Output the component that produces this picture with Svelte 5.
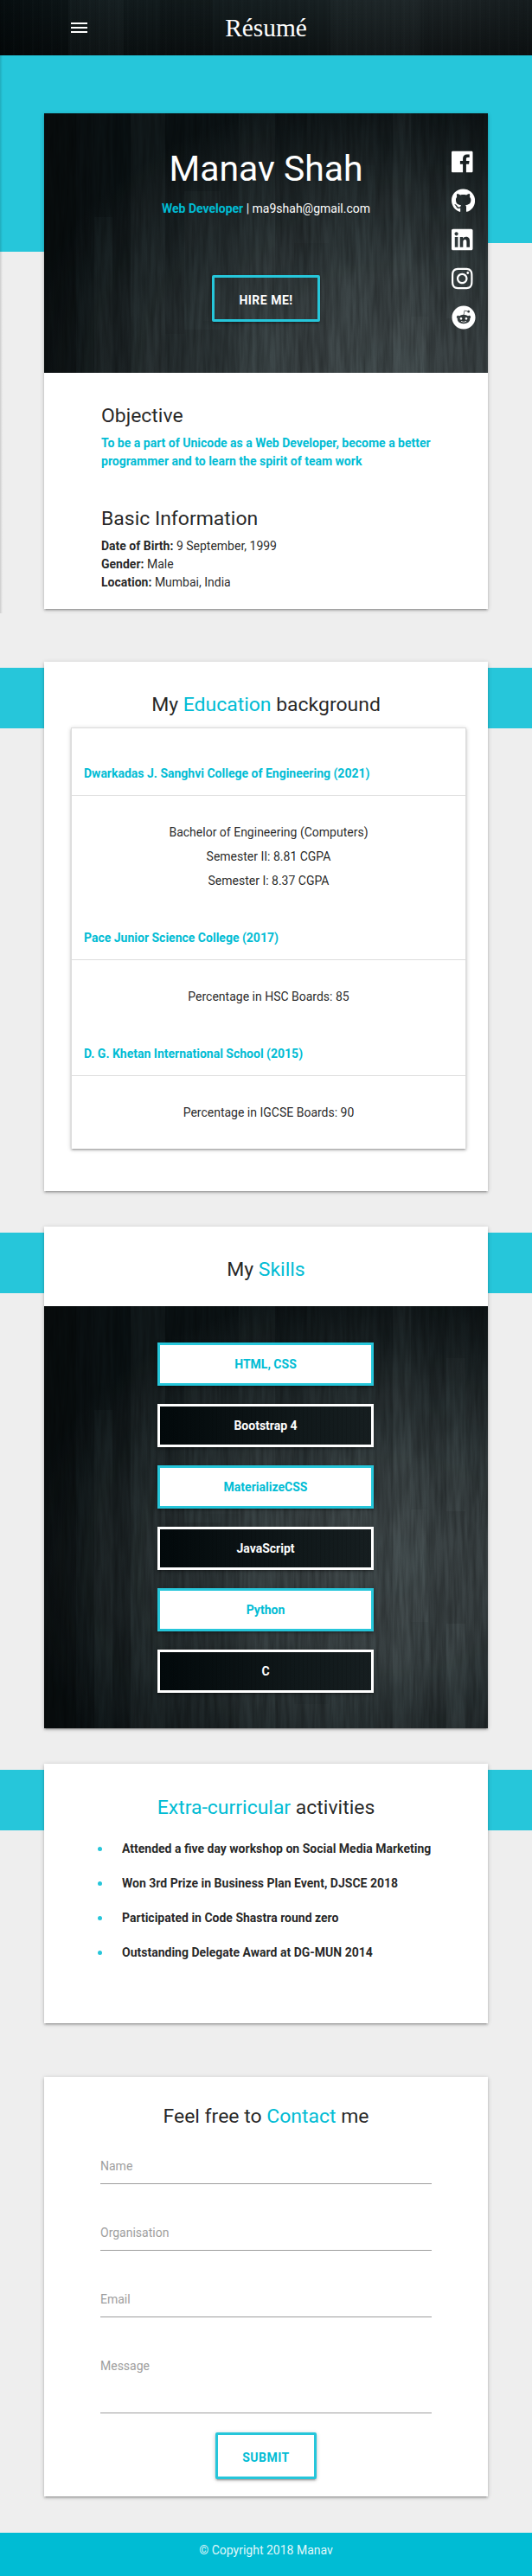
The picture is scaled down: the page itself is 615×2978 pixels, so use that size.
<script>
  const icons = [
    { name: 'Facebook', w: 448, d: 'M448 56.7v398.5c0 13.7-11.1 24.7-24.7 24.7H309.1V306.5h58.2l8.7-67.6h-67v-43.2c0-19.6 5.4-32.9 33.5-32.9h35.8v-60.5c-6.2-.8-27.4-2.7-52.2-2.7-51.6 0-87 31.5-87 89.4v49.9h-58.4v67.6h58.4V480H24.7C11.1 480 0 468.9 0 455.3V56.7C0 43.1 11.1 32 24.7 32h398.5c13.7 0 24.8 11.1 24.8 24.7z' },
    { name: 'GitHub', w: 496, d: 'M165.9 397.4c0 2-2.3 3.6-5.2 3.6-3.3.3-5.6-1.3-5.6-3.6 0-2 2.3-3.6 5.2-3.6 3-.3 5.6 1.3 5.6 3.6zm-31.1-4.5c-.7 2 1.3 4.3 4.3 4.9 2.6 1 5.6 0 6.2-2s-1.3-4.3-4.3-5.2c-2.6-.7-5.5.3-6.2 2.3zm44.2-1.7c-2.9.7-4.9 2.6-4.6 4.9.3 2 2.9 3.3 5.9 2.6 2.9-.7 4.9-2.6 4.6-4.6-.3-1.9-3-3.2-5.9-2.9zM244.8 8C106.1 8 0 113.3 0 252c0 110.9 69.8 205.8 169.5 239.2 12.8 2.3 17.3-5.6 17.3-12.1 0-6.2-.3-40.4-.3-61.4 0 0-70 15-84.7-29.8 0 0-11.4-29.1-27.8-36.6 0 0-22.9-15.7 1.6-15.4 0 0 24.9 2 38.6 25.8 21.9 38.6 58.6 27.5 72.9 20.9 2.3-16 8.8-27.1 16-33.7-55.9-6.2-112.3-14.3-112.3-110.5 0-27.5 7.6-41.3 23.6-58.9-2.6-6.5-11.1-33.3 2.6-67.9 20.9-6.5 69 27 69 27 20-5.6 41.5-8.5 62.8-8.5s42.8 2.9 62.8 8.5c0 0 48.1-33.6 69-27 13.7 34.7 5.2 61.4 2.6 67.9 16 17.7 25.8 31.5 25.8 58.9 0 96.5-58.9 104.2-114.8 110.5 9.2 7.9 17 22.9 17 46.4 0 33.7-.3 75.4-.3 83.6 0 6.5 4.6 14.4 17.3 12.1C428.2 457.8 496 362.9 496 252 496 113.3 383.5 8 244.8 8z' },
    { name: 'LinkedIn', w: 448, d: 'M416 32H31.9C14.3 32 0 46.5 0 64.3v383.4C0 465.5 14.3 480 31.9 480H416c17.6 0 32-14.5 32-32.3V64.3c0-17.8-14.4-32.3-32-32.3zM135.4 416H69V202.2h66.5V416zm-33.2-243c-21.3 0-38.5-17.3-38.5-38.5S80.9 96 102.2 96c21.2 0 38.5 17.3 38.5 38.5 0 21.3-17.2 38.5-38.5 38.5zm282.1 243h-66.4V312c0-24.8-.5-56.7-34.5-56.7-34.6 0-39.9 27-39.9 54.9V416h-66.4V202.2h63.7v29.2h.9c8.9-16.8 30.6-34.5 62.9-34.5 67.2 0 79.7 44.3 79.7 101.9V416z' },
    { name: 'Instagram', w: 448, d: 'M224.1 141c-63.6 0-114.9 51.3-114.9 114.9s51.3 114.9 114.9 114.9S339 319.5 339 255.9 287.7 141 224.1 141zm0 189.6c-41.1 0-74.7-33.5-74.7-74.7s33.5-74.7 74.7-74.7 74.7 33.5 74.7 74.7-33.6 74.7-74.7 74.7zm146.4-194.3c0 14.9-12 26.8-26.8 26.8-14.9 0-26.8-12-26.8-26.8s12-26.8 26.8-26.8 26.8 12 26.8 26.8zm76.1 27.2c-1.7-35.9-9.9-67.7-36.2-93.9-26.2-26.2-58-34.4-93.9-36.2-37-2.1-147.9-2.1-184.9 0-35.8 1.7-67.6 9.9-93.9 36.1s-34.4 58-36.2 93.9c-2.1 37-2.1 147.9 0 184.9 1.7 35.9 9.9 67.7 36.2 93.9s58 34.4 93.9 36.2c37 2.1 147.9 2.1 184.9 0 35.9-1.7 67.7-9.9 93.9-36.2 26.2-26.2 34.4-58 36.2-93.9 2.1-37 2.1-147.8 0-184.8zM398.8 388c-7.8 19.6-22.9 34.7-42.6 42.6-29.5 11.7-99.5 9-132.1 9s-102.7 2.6-132.1-9c-19.6-7.8-34.7-22.9-42.6-42.6-11.7-29.5-9-99.5-9-132.1s-2.6-102.7 9-132.1c7.8-19.6 22.9-34.7 42.6-42.6 29.5-11.7 99.5-9 132.1-9s102.7-2.6 132.1 9c19.6 7.8 34.7 22.9 42.6 42.6 11.7 29.5 9 99.5 9 132.1s2.7 102.7-9 132.1z' },
    { name: 'Reddit', w: 512, d: 'M201.5 305.5c-13.8 0-24.9-11.1-24.9-24.6 0-13.8 11.1-24.9 24.9-24.9 13.6 0 24.6 11.1 24.6 24.9 0 13.6-11.1 24.6-24.6 24.6zM504 256c0 137-111 248-248 248S8 393 8 256 119 8 256 8s248 111 248 248zm-132.3-41.2c-9.4 0-17.7 3.9-23.8 10-22.4-15.5-52.6-25.5-86.1-26.6l17.4-78.3 55.4 12.5c0 13.6 11.1 24.6 24.6 24.6 13.8 0 24.9-11.3 24.9-24.9s-11.1-24.9-24.9-24.9c-9.7 0-18 5.8-22.1 13.8l-61.2-13.6c-3-.8-6.1 1.4-6.9 4.4l-19.1 86.4c-33.2 1.4-63.1 11.3-85.5 26.8-6.1-6.4-14.7-10.2-24.1-10.2-34.9 0-46.3 46.9-14.4 62.8-1.1 5-1.7 10.2-1.7 15.5 0 52.6 59.2 95.2 132 95.2 73.1 0 132.3-42.6 132.3-95.2 0-5.3-.6-10.8-1.9-15.8 31.3-16 19.8-62.5-14.9-62.5zM302.8 331c-18.2 18.2-76.1 17.9-93.6 0-2.2-2.2-6.1-2.2-8.3 0-2.5 2.5-2.5 6.4 0 8.6 22.8 22.8 87.3 22.8 110.2 0 2.5-2.2 2.5-6.1 0-8.6-2.2-2.2-6.1-2.2-8.3 0zm7.7-75c-13.6 0-24.6 11.1-24.6 24.9 0 13.6 11.1 24.6 24.6 24.6 13.8 0 24.9-11.1 24.9-24.6 0-13.8-11-24.9-24.9-24.9z' }
  ];

  const schools = [
    { title: 'Dwarkadas J. Sanghvi College of Engineering (2021)', lines: ['Bachelor of Engineering (Computers)', 'Semester II: 8.81 CGPA', 'Semester I: 8.37 CGPA'] },
    { title: 'Pace Junior Science College (2017)', lines: ['Percentage in HSC Boards: 85'] },
    { title: 'D. G. Khetan International School (2015)', lines: ['Percentage in IGCSE Boards: 90'] }
  ];

  const skills = ['HTML, CSS', 'Bootstrap 4', 'MaterializeCSS', 'JavaScript', 'Python', 'C'];

  const activities = [
    'Attended a five day workshop on Social Media Marketing',
    'Won 3rd Prize in Business Plan Event, DJSCE 2018',
    'Participated in Code Shastra round zero',
    'Outstanding Delegate Award at DG-MUN 2014'
  ];

  const fields = ['Name', 'Organisation', 'Email'];

  // Floor boards: x, width, y, height, lightness shift
  const boards = [
    [0, 37, 0, 490, -0.16], [37, 21, 0, 490, -0.04], [58, 21, 120, 370, 0.02], [79, 21, 0, 490, -0.06],
    [100, 40, 0, 490, 0.03], [140, 22, 0, 255, -0.03], [162, 42, 90, 160, 0.02], [184, 42, 240, 250, -0.03],
    [225, 42, 0, 490, 0.025], [267, 37, 0, 185, -0.04], [289, 40, 150, 310, -0.03], [329, 54, 60, 430, 0.01],
    [383, 20, 0, 490, -0.03], [403, 21, 0, 490, 0.03], [424, 20, 235, 130, 0.03], [445, 20, 0, 490, -0.05],
    [465, 22, 60, 177, 0.02], [465, 22, 237, 130, -0.03], [465, 22, 367, 123, 0.03], [487, 26, 0, 490, -0.03]
  ];
</script>

{#snippet wood()}
  <svg class="wood" width="513" height="490" viewBox="0 0 513 490" aria-hidden="true">
    <defs>
      <radialGradient id="glow" gradientUnits="userSpaceOnUse" cx="0" cy="0" r="1" gradientTransform="translate(400 300) scale(430 325)">
        <stop offset="0" stop-color="#444d4f" />
        <stop offset="0.35" stop-color="#394244" />
        <stop offset="0.7" stop-color="#20282a" />
        <stop offset="1" stop-color="#0b1214" />
      </radialGradient>
      <filter id="grain" x="0" y="0" width="100%" height="100%">
        <feTurbulence type="fractalNoise" baseFrequency="0.22 0.016" numOctaves="3" seed="7" />
        <feColorMatrix values="0 0 0 0 0  0 0 0 0 0  0 0 0 0 0  0.5 0 0 0 -0.14" />
      </filter>
    </defs>
    <rect width="513" height="490" fill="url(#glow)" />
    {#each boards as [x, w, y, h, shade]}
      <rect {x} {y} width={w} height={h} fill={shade < 0 ? '#000' : '#9fb0b4'} opacity={Math.abs(shade) * 1.6} />
    {/each}
    <rect width="513" height="490" filter="url(#grain)" />
  </svg>
{/snippet}

<div class="page">
  <header class="nav">
    <svg class="menu" width="24" height="24" viewBox="0 0 24 24" fill="#fff" aria-label="Menu"><path d="M2 6h19v2H2zM2 11h19v2H2zM2 16h19v2H2z" /></svg>
    <span class="brand">Résumé</span>
  </header>

  <section class="hero">
    <article class="card">
      <div class="banner">
        {@render wood()}
        <div class="intro">
          <h1>Manav Shah</h1>
          <p><b class="accent">Web Developer</b> | ma9shah@gmail.com</p>
          <button class="btn hire">Hire me!</button>
        </div>
        <nav class="social">
          {#each icons as icon}
            <svg height="28" width={(icon.w / 512) * 28} viewBox="0 0 {icon.w} 512" fill="#fff" aria-label={icon.name}><path d={icon.d} /></svg>
          {/each}
        </nav>
      </div>
      <div class="about">
        <h5>Objective</h5>
        <p class="objective">To be a part of Unicode as a Web Developer, become a better programmer and to learn the spirit of team work</p>
        <h5>Basic Information</h5>
        <p><b>Date of Birth:</b> 9 September, 1999</p>
        <p><b>Gender:</b> Male</p>
        <p><b>Location:</b> Mumbai, India</p>
      </div>
    </article>
  </section>

  <section class="band education">
    <article class="card">
      <h5 class="title">My <span class="accent">Education</span> background</h5>
      <ul class="schools">
        {#each schools as school}
          <li>
            <div class="school">{school.title}</div>
            <div class="marks">
              {#each school.lines as line}<span>{line}</span>{/each}
            </div>
          </li>
        {/each}
      </ul>
    </article>
  </section>

  <section class="band skills">
    <article class="card">
      <h5 class="title">My <span class="accent">Skills</span></h5>
      <div class="panel">
        {@render wood()}
        {#each skills as skill, i}
          <div class="skill" class:dark={i % 2 === 1}>{skill}</div>
        {/each}
      </div>
    </article>
  </section>

  <section class="band extra">
    <article class="card">
      <h5 class="title"><span class="accent">Extra-curricular</span> activities</h5>
      <ul class="activities">
        {#each activities as activity}<li>{activity}</li>{/each}
      </ul>
    </article>
  </section>

  <section class="contact">
    <article class="card">
      <h5 class="title">Feel free to <span class="accent">Contact</span> me</h5>
      <form>
        {#each fields as field}<div class="field">{field}</div>{/each}
        <div class="field message">Message</div>
        <button type="button" class="btn submit">Submit</button>
      </form>
    </article>
  </section>

  <footer>© Copyright 2018 Manav</footer>
</div>

<style>
  :global(body) { margin: 0; background: #eee; }
  .page {
    position: relative;
    width: 615px;
    height: 2978px;
    display: flex;
    flex-direction: column;
    overflow: hidden;
    background: #eee;
    color: rgba(0, 0, 0, 0.87);
    font: 14px/21px Roboto, sans-serif;
  }
  * { box-sizing: border-box; }
  h1, h5, p, ul { margin: 0; padding: 0; font-weight: 400; }
  ul { list-style: none; }
  b { font-weight: 700; }
  h5 { font-size: 22.96px; line-height: 27px; }
  .accent { color: #00bcd4; }
  .title { text-align: center; }

  .nav {
    height: 64px;
    flex: none;
    display: grid;
    grid-template-columns: 80px 1fr 80px;
    align-items: center;
    z-index: 1;
    background:
      repeating-linear-gradient(90deg, rgba(0, 0, 0, 0.07) 0 1px, transparent 1px 4px, rgba(150, 170, 175, 0.015) 4px 6px, transparent 6px 11px),
      linear-gradient(90deg, transparent 79px, rgba(140, 160, 165, 0.04) 79px 143px, transparent 143px 185px, rgba(0, 0, 0, 0.12) 185px 246px, transparent 246px 382px, rgba(140, 160, 165, 0.04) 382px 486px, transparent 486px),
      linear-gradient(180deg, transparent, rgba(0, 0, 0, 0.45)),
      linear-gradient(90deg, #060d0f, #111a1c 22%, #172022 60%, #1b2224 85%, #151c1e);
  }
  .menu { grid-column: 2; grid-row: 1; }
  .brand {
    grid-column: 2;
    grid-row: 1;
    justify-self: center;
    color: #fff;
    font: 29.4px/64px "Liberation Serif", serif;
  }

  .card {
    width: 513px;
    margin: 0 auto;
    background: #fff;
    box-shadow: 0 2px 2px 0 rgba(0, 0, 0, 0.14), 0 3px 1px -2px rgba(0, 0, 0, 0.12), 0 1px 5px 0 rgba(0, 0, 0, 0.2);
  }

  .hero {
    height: 701px;
    flex: none;
    padding-top: 67px;
    background:
      linear-gradient(90deg, rgba(0, 0, 0, 0.14), transparent) 0 0 / 3px 645px no-repeat,
      linear-gradient(#26c6da, #26c6da) 0 0 / 100% 217px no-repeat,
      linear-gradient(#26c6da, #26c6da) 0 0 / 51px 227px no-repeat;
  }
  .hero .card { height: 573px; }
  .banner {
    position: relative;
    height: 300px;
    display: grid;
    grid-template-columns: 42px 1fr 42px;
    overflow: hidden;
    color: #fff;
  }
  .wood { position: absolute; top: 0; left: 0; }
  .intro {
    position: relative;
    grid-column: 2;
    display: flex;
    flex-direction: column;
    align-items: center;
    padding-top: 40px;
  }
  h1 { font-size: 40.88px; line-height: 48px; }
  .intro p { margin-top: 12px; }
  .btn {
    height: 54px;
    padding: 8px 0 4px;
    border: 3px solid #26c6da;
    border-radius: 2px;
    box-shadow: 0 2px 2px 0 rgba(0, 0, 0, 0.14), 0 3px 1px -2px rgba(0, 0, 0, 0.12), 0 1px 5px 0 rgba(0, 0, 0, 0.2);
    font: 700 14px/36px Roboto, sans-serif;
    letter-spacing: 0.5px;
    text-transform: uppercase;
  }
  .hire { width: 125px; margin-top: 66px; background: transparent; color: #fff; }
  .social {
    position: relative;
    display: flex;
    flex-direction: column;
    gap: 17px;
    padding-top: 42.3px;
  }
  .social svg { display: block; flex: none; }

  .about { padding: 36px 65px 0 66px; }
  .objective { color: #00bcd4; font-weight: 700; margin: 8px 0 42px; }
  .about h5:nth-of-type(2) { margin-bottom: 8px; }

  .band { flex: none; background: linear-gradient(#26c6da, #26c6da) 0 7px / 100% 70px no-repeat; }
  .band .title { padding-top: 36px; }
  .education { height: 653px; }
  .education .card { height: 612px; }
  .schools {
    width: 457px;
    height: 487px;
    margin: 13px 0 0 31px;
    padding-top: 28px;
    border: 1px solid #ddd;
    border-bottom: 0;
    box-shadow: 0 2px 2px 0 rgba(0, 0, 0, 0.14), 0 3px 1px -2px rgba(0, 0, 0, 0.12), 0 1px 5px 0 rgba(0, 0, 0, 0.2);
  }
  .school { padding: 14px; border-bottom: 1px solid #ddd; color: #00bcd4; font-weight: 700; }
  .marks { display: flex; flex-direction: column; align-items: center; padding: 28px 0; line-height: 28px; }

  .skills { height: 621px; }
  .skills .card { height: 580px; }
  .panel {
    position: relative;
    height: 488px;
    margin-top: 29px;
    overflow: hidden;
    display: flex;
    flex-direction: column;
    align-items: center;
    gap: 21px;
    padding: 42px 1px 0 0;
  }
  .skill {
    position: relative;
    width: 250px;
    height: 50px;
    border: 3px solid #26c6da;
    background: #fff;
    color: #00bcd4;
    font-weight: 700;
    line-height: 44px;
    text-align: center;
    box-shadow: 0 2px 2px 0 rgba(0, 0, 0, 0.14), 0 3px 1px -2px rgba(0, 0, 0, 0.12), 0 1px 5px 0 rgba(0, 0, 0, 0.2);
  }
  .dark {
    border-color: #fff;
    color: #fff;
    background:
      repeating-linear-gradient(90deg, rgba(0, 0, 0, 0.1) 0 1px, transparent 1px 5px),
      linear-gradient(90deg, #02090b, #0a1113 35%, #10181a 65%, #161e20);
  }

  .extra { height: 362px; }
  .extra .card { height: 300px; }
  .extra .title { padding-top: 37px; }
  .activities { padding: 24px 0 0 62px; }
  .activities li { display: flex; align-items: center; gap: 23px; height: 21px; margin-bottom: 19px; font-weight: 700; }
  .activities li::before { content: ""; width: 5px; height: 5px; border-radius: 50%; background: #26c6da; }

  .contact { height: 527px; flex: none; }
  .contact .card { height: 485px; }
  .contact .title { padding-top: 32px; }
  form { display: flex; flex-direction: column; padding: 33px 65px 0; }
  .field { height: 77px; padding-top: 1px; color: #9e9e9e; background: linear-gradient(#9e9e9e, #9e9e9e) 0 31px / 100% 1px no-repeat; }
  .message { height: 88px; background-position: 0 65px; }
  .submit { align-self: center; width: 117px; background: #fff; color: #00bcd4; }

  footer {
    height: 50px;
    flex: none;
    padding-top: 10px;
    background: #00bcd4;
    color: rgba(255, 255, 255, 0.9);
    text-align: center;
  }
</style>
